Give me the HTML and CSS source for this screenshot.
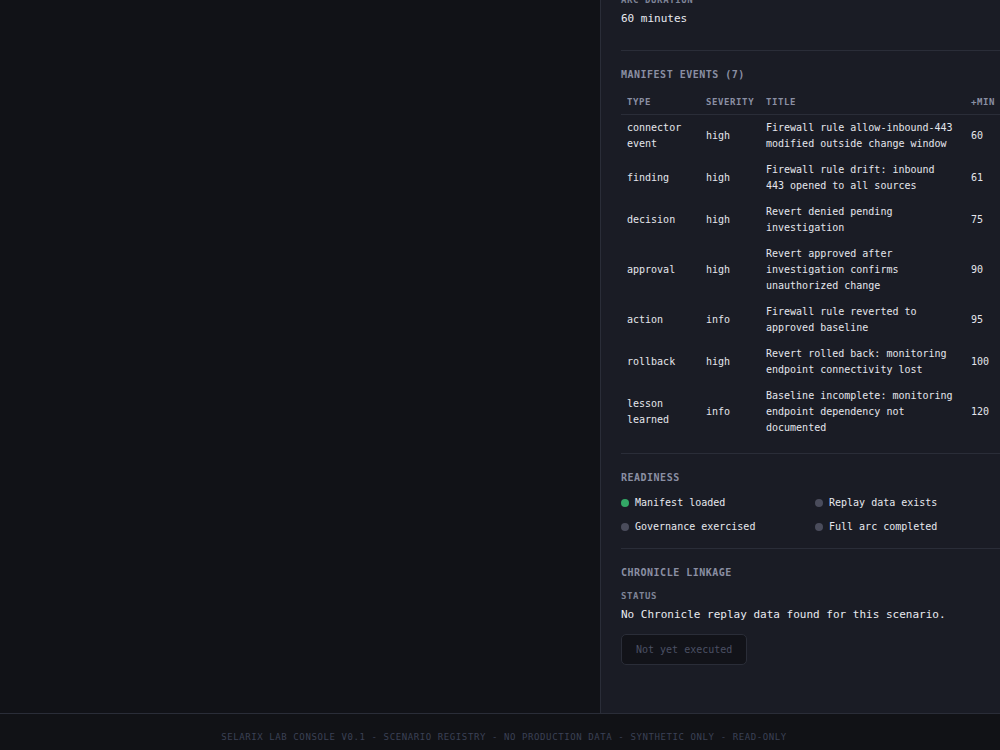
FILE: index.html
```html
<!DOCTYPE html>
<html lang="en">
<head>
<meta charset="utf-8">
<title>Selarix Lab Console - Scenario Registry</title>
<link rel="stylesheet" href="styles.css">
</head>
<body>
<div class="app">
  <main class="layout">
    <section class="canvas"></section>
    <aside class="detail">
      <div class="section section-first">
        <div class="label">ARC DURATION</div>
        <div class="value">60 minutes</div>
      </div>
      <div class="section section-table">
        <h3 class="heading">MANIFEST EVENTS (7)</h3>
        <table class="events">
          <colgroup>
            <col class="c-type"><col class="c-sev"><col class="c-title"><col class="c-min">
          </colgroup>
          <thead>
            <tr><th>TYPE</th><th>SEVERITY</th><th>TITLE</th><th>+MIN</th></tr>
          </thead>
          <tbody>
            <tr><td>connector event</td><td>high</td><td class="t">Firewall rule allow-inbound-443 modified outside change window</td><td>60</td></tr>
            <tr><td>finding</td><td>high</td><td class="t">Firewall rule drift: inbound 443 opened to all sources</td><td>61</td></tr>
            <tr><td>decision</td><td>high</td><td class="t">Revert denied pending investigation</td><td>75</td></tr>
            <tr><td>approval</td><td>high</td><td class="t">Revert approved after investigation confirms unauthorized change</td><td>90</td></tr>
            <tr><td>action</td><td>info</td><td class="t">Firewall rule reverted to approved baseline</td><td>95</td></tr>
            <tr><td>rollback</td><td>high</td><td class="t">Revert rolled back: monitoring endpoint connectivity lost</td><td>100</td></tr>
            <tr><td>lesson learned</td><td>info</td><td class="t">Baseline incomplete: monitoring endpoint dependency not documented</td><td>120</td></tr>
          </tbody>
        </table>
      </div>
      <div class="section section-ready">
        <h3 class="heading">READINESS</h3>
        <ul class="checks">
          <li><span class="dot dot-on"></span>Manifest loaded</li>
          <li><span class="dot"></span>Replay data exists</li>
          <li><span class="dot"></span>Governance exercised</li>
          <li><span class="dot"></span>Full arc completed</li>
        </ul>
      </div>
      <div class="section section-last">
        <h3 class="heading">CHRONICLE LINKAGE</h3>
        <div class="label label-status">STATUS</div>
        <div class="value">No Chronicle replay data found for this scenario.</div>
        <button class="btn" disabled>Not yet executed</button>
      </div>
    </aside>
  </main>
  <footer class="footer">SELARIX LAB CONSOLE V0.1 - SCENARIO REGISTRY - NO PRODUCTION DATA - SYNTHETIC ONLY - READ-ONLY</footer>
</div>
</body>
</html>
```

FILE: styles.css
```css
* { box-sizing: border-box; }
html, body {
  margin: 0;
  padding: 0;
  background: #111217;
  overflow: hidden;
  height: 100%;
}
body {
  font-family: "DejaVu Sans Mono", "Liberation Mono", monospace;
  color: #e6e8ee;
}
.app {
  width: 1000px;
  height: 750px;
  overflow: hidden;
  display: flex;
  flex-direction: column;
}
.layout {
  display: grid;
  grid-template-columns: 600px 421px;
  height: 713px;
  flex: none;
}
.canvas {
  background: #111217;
}
.detail {
  background: #1a1c25;
  border-left: 1px solid #2a2d38;
  padding: 0 20px;
  overflow: hidden;
}
.section {
  border-top: 1px solid #2a2d38;
  padding: 17px 0 12px;
}
.section-first {
  border-top: none;
  margin-top: -6px;
  padding: 0 0 23px;
}
.section-ready { padding-bottom: 13px; }
.section-last { padding-bottom: 40px; }
.label {
  font-size: 9px;
  line-height: 12px;
  font-weight: bold;
  letter-spacing: 0.6px;
  color: #7f8497;
}
.value {
  font-size: 11px;
  line-height: 16px;
  margin-top: 5px;
  color: #e8eaf0;
}
.heading {
  margin: 0 0 7px;
  font-size: 10px;
  line-height: 14px;
  font-weight: bold;
  letter-spacing: 0.5px;
  color: #8a8fa3;
}
.events {
  width: 380px;
  border-collapse: collapse;
  table-layout: fixed;
  font-size: 10px;
}
.c-type { width: 79px; }
.c-sev { width: 60px; }
.c-title { width: 205px; }
.c-min { width: 36px; }
.events th {
  text-align: left;
  font-size: 9px;
  line-height: 14px;
  font-weight: bold;
  letter-spacing: 0.6px;
  color: #8a8fa3;
  padding: 6px 0 5px 6px;
  border-bottom: 1px solid #2a2d38;
  white-space: nowrap;
}
.events td {
  padding: 5px 0 5px 6px;
  line-height: 16px;
  vertical-align: middle;
  color: #e4e6ec;
}
.events td.t { padding-right: 10px; }
.section-ready .heading { margin-bottom: 10px; }
.checks {
  list-style: none;
  margin: 0;
  padding: 0;
  display: grid;
  grid-template-columns: 1fr 1fr;
  column-gap: 8px;
  row-gap: 8px;
}
.checks li {
  display: flex;
  align-items: center;
  gap: 6px;
  font-size: 10px;
  line-height: 16px;
  color: #e6e8ee;
}
.dot {
  width: 8px;
  height: 8px;
  border-radius: 50%;
  background: #4a4c5b;
  flex: none;
}
.dot-on { background: #33a866; }
.section-last .heading { margin-bottom: 10px; }
.label-status { margin-bottom: 0; }
.section-last .value { margin-top: 5px; }
.btn {
  display: block;
  margin-top: 11px;
  height: 31px;
  padding: 0 14px;
  font-family: inherit;
  font-size: 10px;
  color: #4b5064;
  background: #121319;
  border: 1px solid #2a2d38;
  border-radius: 5px;
}
.footer {
  flex: none;
  background: #111216;
  border-top: 1px solid #2a2d38;
  padding: 17px 0 18px;
  text-align: center;
  font-size: 9px;
  line-height: 12px;
  letter-spacing: 0.6px;
  color: #3b4155;
  padding-left: 8px;
}
```
